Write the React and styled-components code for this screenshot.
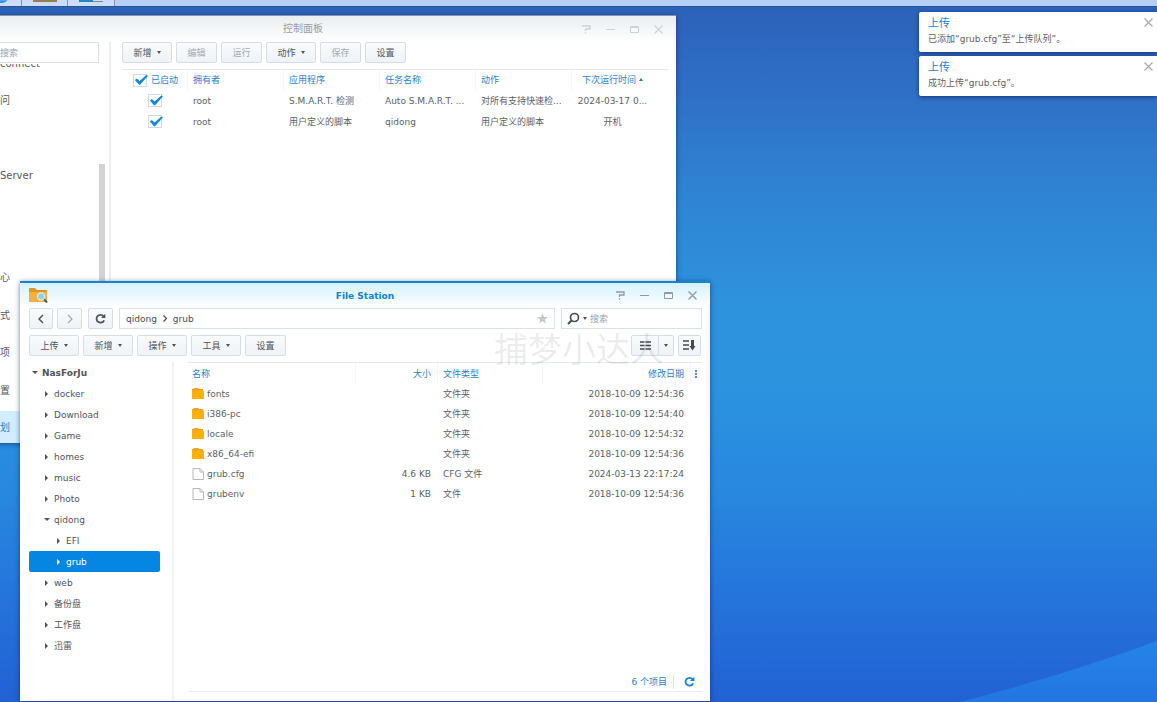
import React from "react";
import styled, { createGlobalStyle, css } from "styled-components";

const GlobalStyle = createGlobalStyle`
  * {
    box-sizing: border-box;
  }

  body {
    margin: 0;
    font-family: "DejaVu Sans", "Noto Sans CJK SC", sans-serif;
    font-size: 9px;
    line-height: 14px;
    color: #5b5f65;
  }

  button, input {
    font: inherit;
    color: inherit;
  }
`;

const Desktop = styled.main`
  position: relative;
  min-height: 100vh;
  overflow: hidden;
  background: linear-gradient(
    180deg,
    #2c60b9 0%,
    #2f72c8 15%,
    #2f84d3 28%,
    #2e92dc 43%,
    #2b93df 55%,
    #2888df 70%,
    #2577dc 83%,
    #2261d4 100%
  );
`;

const Slope = styled.svg`
  position: absolute;
  right: 0;
  bottom: 0;
  width: 240px;
  height: 64px;
`;

const Taskbar = styled.header`
  position: relative;
  display: flex;
  height: 7px;
  background: #b6cff4;
  border-bottom: 1px solid #2a5391;
`;

const TaskSlot = styled.div`
  display: flex;
  justify-content: center;
  width: ${(props) => props.$width};
  background: #cddcf8;
  border-right: 1px solid #7f93bd;
`;

const Window = styled.section`
  position: absolute;
  display: flex;
  flex-direction: column;
  background: #fff;
  box-shadow: 0 1px 5px rgba(8, 30, 80, 0.6);
`;

const ControlWindow = styled(Window)`
  top: 15px;
  left: -70px;
  width: 746px;
  height: 428px;
  border-top: 1px solid #8797ab;
`;

const FileWindow = styled(Window)`
  top: 281px;
  bottom: 1px;
  left: 20px;
  width: 690px;
  border-top: 2px solid #1584cb;
`;

const TitleBar = styled.div`
  display: grid;
  grid-template-columns: 1fr auto 1fr;
  align-items: center;
  height: ${(props) => (props.$active ? "25px" : "26px")};
  padding: 0 9px;
  background: ${(props) =>
    props.$active
      ? "linear-gradient(#d5f2ff, #fff)"
      : "linear-gradient(#e9eef0, #fff)"};
`;

const Title = styled.h1`
  margin: 0;
  grid-column: 2;
  font-size: ${(props) => (props.$active ? "9px" : "10px")};
  font-weight: ${(props) => (props.$active ? 700 : 400)};
  color: ${(props) => (props.$active ? "#1581cb" : "#999da1")};
`;

const WindowButtons = styled.div`
  display: flex;
  justify-content: flex-end;
  gap: 12px;
  padding-right: 3px;
  color: ${(props) => (props.$active ? "#8d9aa5" : "#cdd2d5")};
`;

const IconButton = styled.button`
  display: flex;
  align-items: center;
  justify-content: center;
  width: 12px;
  height: 12px;
  padding: 0;
  border: 0;
  background: none;
  color: inherit;
  cursor: pointer;
`;

const Button = styled.button`
  display: flex;
  align-items: center;
  justify-content: center;
  gap: 5px;
  width: ${(props) => props.$width || "41px"};
  height: 21px;
  padding: 0;
  border: 1px solid #d5dde5;
  border-radius: 2px;
  background: linear-gradient(#f9fbfc, #eff3f7);
  color: #4c535a;

  &:disabled {
    color: #a3a9b3;
  }
`;

const Caret = styled.span`
  border: 2px solid transparent;
  border-top: 3px solid #4c535a;
  border-bottom: 0;
`;

const Toolbar = styled.div`
  display: flex;
  gap: 4px;
`;

const Spacer = styled.div`
  flex: 1;
`;

const Columns = styled.div`
  display: flex;
  flex: 1;
  min-height: 0;
`;

/* control panel */

const SettingsNav = styled.nav`
  display: flex;
  flex-direction: column;
  width: 181px;
  border-right: 2px solid #ededee;
`;

const NavSearch = styled.input`
  width: 169px;
  height: 21px;
  padding: 0 0 0 69px;
  border: 1px solid #d9dee3;
  background: #fff;

  &::placeholder {
    color: #a0a0a5;
  }
`;

const NavBody = styled.div`
  display: flex;
  flex: 1;
  margin-top: 1px;
  overflow: hidden;
`;

const NavList = styled.div`
  display: flex;
  flex: 1;
  flex-direction: column;
  gap: 3px;
`;

const NavItem = styled.a`
  flex: none;
  height: 34px;
  margin-top: ${(props) => props.$space || 0};
  padding-left: 70px;
  line-height: 34px;
  font-size: 10px;
  text-decoration: none;
  color: ${(props) => (props.$active ? "#2b7cc7" : "#55595f")};
  background: ${(props) => (props.$active ? "#d3edfe" : "none")};
`;

const ScrollThumb = styled.div`
  width: 6px;
  height: 200px;
  margin: 100px 4px 0 0;
  background: #d3d3d4;
`;

const TaskPane = styled.div`
  flex: 1;
  padding: 0 8px 0 11px;
`;

const DataTable = styled.table`
  width: 100%;
  margin-top: 6px;
  border-top: 1px solid #e2e8ee;
  border-collapse: separate;
  border-spacing: 0;
  table-layout: fixed;

  th,
  td {
    height: ${(props) => props.$rowHeight};
    padding: 0 6px;
    overflow: hidden;
    font-weight: 400;
    text-align: left;
    text-overflow: ellipsis;
    white-space: nowrap;
  }

  th {
    height: ${(props) => props.$headHeight};
    color: #2b7fc5;
  }

  th + th {
    box-shadow: inset 1px 0 #f4f6f8;
  }
`;

const NextRun = css`
  && {
    padding: 0 19px 0 5px;
    text-align: center;
  }
`;

const NextRunHead = styled.th`
  ${NextRun}
`;

const NextRunCell = styled.td`
  ${NextRun}
`;

const SortMark = styled.span`
  display: inline-block;
  margin-left: 3px;
  border: 2px solid transparent;
  border-bottom: 3px solid #2b6fa5;
  border-top: 0;
  vertical-align: 2px;
`;

const CheckLabel = styled.label`
  display: flex;
  align-items: center;
  gap: 4px;
  padding-left: ${(props) => props.$indent};
`;

const Checkbox = styled.input.attrs({ type: "checkbox" })`
  appearance: none;
  width: 14px;
  height: 13px;
  margin: 0;
  border: 1px solid #cdd9e4;
  background: #fff;

  &:checked::before {
    content: "";
    display: block;
    width: 14px;
    height: 11px;
    background: #1686d9;
    clip-path: polygon(6% 50%, 20% 36%, 40% 60%, 88% 4%, 100% 12%, 44% 94%, 36% 94%);
  }
`;

/* file station */

const NavRow = styled.div`
  display: flex;
  gap: 6px;
  padding: 0 8px 0 9px;
`;

const ActionRow = styled(Toolbar)`
  padding: 6px 9px 0;
`;

const PathBar = styled.nav`
  display: flex;
  flex: 1;
  align-items: center;
  gap: 5px;
  height: 21px;
  padding: 0 6px;
  border: 1px solid #d9e0e6;

  a {
    color: #464b51;
    text-decoration: none;
  }
`;

const SearchBox = styled.label`
  display: flex;
  align-items: center;
  gap: 3px;
  width: 141px;
  height: 21px;
  padding: 0 5px;
  border: 1px solid #d9e0e6;

  input {
    flex: 1;
    min-width: 0;
    padding: 0;
    border: 0;
    outline: 0;
    background: none;
  }

  input::placeholder {
    color: #a0a0a5;
  }
`;

const SplitButton = styled.div`
  display: flex;

  button:first-child {
    border-radius: 2px 0 0 2px;
  }

  button:last-child {
    border-left: 0;
    border-radius: 0 2px 2px 0;
  }
`;

const Tree = styled.nav`
  width: 154px;
  margin-top: 6px;
  padding: 0 12px 0 9px;
  border-right: 2px solid #f0f2f4;
`;

const TreeItem = styled.a`
  display: flex;
  align-items: center;
  height: 21px;
  padding-left: ${(props) => 3 + props.$level * 12}px;
  border-radius: 2px;
  font-weight: ${(props) => (props.$level ? 400 : 700)};
  text-decoration: none;
  color: ${(props) => (props.$selected ? "#fff" : "#4f545a")};
  background: ${(props) => (props.$selected ? "#0486e2" : "none")};

  svg {
    flex: none;
    width: 6px;
    height: 6px;
    margin-right: 4px;
    fill: currentColor;
  }
`;

const FilePane = styled.div`
  display: flex;
  flex: 1;
  flex-direction: column;
  padding: 0 8px 9px 14px;
`;

const FileTable = styled(DataTable)`
  th:nth-child(1),
  td:nth-child(1) {
    padding-left: 4px;
  }

  th:nth-child(2),
  td:nth-child(2),
  th:nth-child(4),
  td:nth-child(4) {
    text-align: right;
  }

  th:nth-child(5) {
    padding: 0;
  }
`;

const FileName = styled.div`
  display: flex;
  align-items: center;
  gap: 3px;
`;

const StatusBar = styled.footer`
  display: flex;
  align-items: center;
  justify-content: flex-end;
  gap: 6px;
  height: 20px;
  margin-top: auto;
  padding-right: 6px;
  border-bottom: 1px solid #eceff1;
  color: #2b7fc5;

  button {
    width: 23px;
    height: 14px;
    padding-left: 8px;
    border-left: 1px solid #dfe5ea;
    color: #1684c4;
  }
`;

const Watermark = styled.div`
  position: absolute;
  top: 326px;
  left: 494px;
  font-size: 34px;
  line-height: 48px;
  color: rgba(60, 60, 60, 0.1);
  pointer-events: none;
`;

const Toasts = styled.aside`
  position: absolute;
  top: 12px;
  right: 0;
  display: grid;
  gap: 4px;
  width: 238px;
`;

const Toast = styled.div`
  display: flex;
  justify-content: space-between;
  height: 40px;
  padding: 4px 3px 0 9px;
  border-radius: 2px 0 0 2px;
  background: #fff;
  box-shadow: 0 1px 4px rgba(8, 30, 80, 0.7);
  color: #a5a9ad;

  h2 {
    margin: 0;
    font-size: 11px;
    font-weight: 400;
    line-height: 16px;
    color: #2b7cc5;
  }

  p {
    margin: 0;
    color: #5c6065;
  }
`;

const CloseIcon = () => (
  <svg width="9" height="9" viewBox="0 0 9 9" fill="none" stroke="currentColor" strokeWidth="1.200">
    <path d="M.5.5l8 8M8.500.5l-8 8" />
  </svg>
);

const RefreshIcon = () => (
  <svg width="11" height="11" viewBox="0 0 11 11" fill="none" stroke="currentColor" strokeWidth="1.800">
    <path d="M8.600 3.200A4 3.900 0 1 0 9.200 7.300" />
    <path d="M10.300.8v4.200H6z" fill="currentColor" stroke="none" />
  </svg>
);

const FolderIcon = () => (
  <svg width="12" height="12" viewBox="0 0 12 12">
    <path d="M0 1h1l1-1h4l1 1h4v2H0z" fill="#f0a020" />
    <path d="M0 2.500h11l1 1V10.500q0 .5-.5.5H.5Q0 11 0 10.500z" fill="#ffaf05" />
  </svg>
);

const FileIcon = () => (
  <svg width="12" height="12" viewBox="0 0 12 12">
    <path d="M1 .5h7L11.500 4v7.500H1z" fill="#fff" stroke="#b4b8bc" />
    <path d="M8 .5V4h3.500" fill="none" stroke="#b4b8bc" />
  </svg>
);

const AppIcon = () => (
  <svg width="19" height="15" viewBox="0 0 19 15">
    <path d="M0 1q0-1 1-1h5l2 2h9q1 0 1 1v10q0 1-1 1H1q-1 0-1-1z" fill="#dd9526" />
    <path d="M0 4h18v9q0 1-1 1H1q-1 0-1-1z" fill="#f3b13b" />
    <path d="M14.500 10.500l3.500 4" stroke="#52605f" strokeWidth="2" />
    <circle cx="12" cy="8.500" r="3.600" fill="#8fd0ee" stroke="#dceff5" strokeWidth="1.200" />
  </svg>
);

const TreeArrow = ({ open }) => (
  <svg viewBox="0 0 6 6">
    <path d={open ? "M0 1h6L3 4z" : "M1 0v6l3-3z"} />
  </svg>
);

function Controls({ active }) {
  return (
    <WindowButtons $active={active}>
      <IconButton aria-label="帮助">
        <svg width="9" height="9" viewBox="0 0 9 9" fill="none" stroke="currentColor" strokeWidth="1.300">
          <path d="M0 1h8v3H3.500v2M3.500 7.300v1.500" />
        </svg>
      </IconButton>
      <IconButton aria-label="最小化">
        <svg width="9" height="9" viewBox="0 0 9 9" stroke="currentColor">
          <path d="M0 4.500h9" />
        </svg>
      </IconButton>
      <IconButton aria-label="最大化">
        <svg width="9" height="9" viewBox="0 0 9 9" fill="none" stroke="currentColor">
          <path d="M.5 1.500h8v6h-8zM0 2.500h9" />
        </svg>
      </IconButton>
      <IconButton aria-label="关闭">
        <CloseIcon />
      </IconButton>
    </WindowButtons>
  );
}

const settings = [
  { name: "connect", space: "-17px" },
  { name: "问" },
  { name: "Server", space: "38px" },
  { name: "心", space: "65px" },
  { name: "式", space: "1px" },
  { name: "项" },
  { name: "置", space: "1px" },
  { name: "划", active: true },
];

const tasks = [
  ["root", "S.M.A.R.T. 检测", "Auto S.M.A.R.T. ...", "对所有支持快速检...", "2024-03-17 0..."],
  ["root", "用户定义的脚本", "qidong", "用户定义的脚本", "开机"],
];

const tree = [
  { name: "NasForJu", level: 0, open: true },
  { name: "docker", level: 1 },
  { name: "Download", level: 1 },
  { name: "Game", level: 1 },
  { name: "homes", level: 1 },
  { name: "music", level: 1 },
  { name: "Photo", level: 1 },
  { name: "qidong", level: 1, open: true },
  { name: "EFI", level: 2 },
  { name: "grub", level: 2, selected: true },
  { name: "web", level: 1 },
  { name: "备份盘", level: 1 },
  { name: "工作盘", level: 1 },
  { name: "迅雷", level: 1 },
];

const files = [
  { name: "fonts", type: "文件夹", date: "2018-10-09 12:54:36", folder: true },
  { name: "i386-pc", type: "文件夹", date: "2018-10-09 12:54:40", folder: true },
  { name: "locale", type: "文件夹", date: "2018-10-09 12:54:32", folder: true },
  { name: "x86_64-efi", type: "文件夹", date: "2018-10-09 12:54:36", folder: true },
  { name: "grub.cfg", size: "4.6 KB", type: "CFG 文件", date: "2024-03-13 22:17:24" },
  { name: "grubenv", size: "1 KB", type: "文件", date: "2018-10-09 12:54:36" },
];

function ControlPanel() {
  return (
    <ControlWindow>
      <TitleBar>
        <Title>控制面板</Title>
        <Controls />
      </TitleBar>
      <Columns>
        <SettingsNav>
          <NavSearch placeholder="搜索" aria-label="搜索" />
          <NavBody>
            <NavList>
              {settings.map((item) => (
                <NavItem key={item.name} href="#" $space={item.space} $active={item.active}>
                  {item.name}
                </NavItem>
              ))}
            </NavList>
            <ScrollThumb />
          </NavBody>
        </SettingsNav>
        <TaskPane>
          <Toolbar>
            <Button $width="50px">新增 <Caret /></Button>
            <Button disabled>编辑</Button>
            <Button disabled>运行</Button>
            <Button $width="50px">动作 <Caret /></Button>
            <Button disabled>保存</Button>
            <Button>设置</Button>
          </Toolbar>
          <DataTable $headHeight="20px" $rowHeight="21px">
            <colgroup>
              <col width="65" />
              <col width="96" />
              <col width="96" />
              <col width="96" />
              <col width="96" />
              <col />
            </colgroup>
            <thead>
              <tr>
                <th>
                  <CheckLabel $indent="5px">
                    <Checkbox defaultChecked />
                    已启动
                  </CheckLabel>
                </th>
                <th>拥有者</th>
                <th>应用程序</th>
                <th>任务名称</th>
                <th>动作</th>
                <NextRunHead>
                  下次运行时间
                  <SortMark />
                </NextRunHead>
              </tr>
            </thead>
            <tbody>
              {tasks.map(([owner, app, name, action, next]) => (
                <tr key={name}>
                  <td>
                    <CheckLabel $indent="20px">
                      <Checkbox defaultChecked aria-label={name} />
                    </CheckLabel>
                  </td>
                  <td>{owner}</td>
                  <td>{app}</td>
                  <td>{name}</td>
                  <td>{action}</td>
                  <NextRunCell>{next}</NextRunCell>
                </tr>
              ))}
            </tbody>
          </DataTable>
        </TaskPane>
      </Columns>
    </ControlWindow>
  );
}

function FileStation() {
  return (
    <FileWindow>
      <TitleBar $active>
        <AppIcon />
        <Title $active>File Station</Title>
        <Controls active />
      </TitleBar>
      <NavRow>
        <Toolbar>
          <Button $width="24px" aria-label="后退">
            <svg width="6" height="10" viewBox="0 0 6 10" fill="none" stroke="currentColor" strokeWidth="1.500">
              <path d="M5 1L1 5l4 4" />
            </svg>
          </Button>
          <Button $width="25px" disabled aria-label="前进">
            <svg width="6" height="10" viewBox="0 0 6 10" fill="none" stroke="currentColor" strokeWidth="1.300">
              <path d="M1 1l4 4-4 4" />
            </svg>
          </Button>
        </Toolbar>
        <Button $width="25px" aria-label="刷新">
          <RefreshIcon />
        </Button>
        <PathBar>
          <a href="#">qidong</a>
          <svg width="6" height="7" viewBox="0 0 6 7" fill="none" stroke="#464b51" strokeWidth="1.200">
            <path d="M1.500.5l3 3-3 3" />
          </svg>
          <a href="#">grub</a>
          <Spacer />
          <svg width="11" height="11" viewBox="0 0 11 11" fill="#c3c6c9">
            <path d="M5.500 0l1.400 3.900H11L7.700 6.400 9 10.500 5.500 8.100 2 10.500l1.300-4.100L0 3.900h4.100z" />
          </svg>
        </PathBar>
        <SearchBox>
          <svg width="13" height="13" viewBox="0 0 13 13" fill="none" stroke="#4a4f55">
            <circle cx="7.500" cy="5.500" r="4" strokeWidth="1.700" />
            <path d="M4.500 8.500L1 12" strokeWidth="2.200" />
          </svg>
          <Caret />
          <input placeholder="搜索" aria-label="搜索" />
        </SearchBox>
      </NavRow>
      <ActionRow>
        <Button $width="50px">上传 <Caret /></Button>
        <Button $width="50px">新增 <Caret /></Button>
        <Button $width="50px">操作 <Caret /></Button>
        <Button $width="50px">工具 <Caret /></Button>
        <Button>设置</Button>
        <Spacer />
        <SplitButton>
          <Button $width="28px" aria-label="列表视图">
            <svg width="11" height="9" viewBox="0 0 11 9" stroke="#454a50" strokeWidth="1.400">
              <path d="M0 1h4.500M5.500 1H11M0 4.500h4.500M5.500 4.500H11M0 8h4.500M5.500 8H11" />
            </svg>
          </Button>
          <Button $width="15px" aria-label="视图选项">
            <Caret />
          </Button>
        </SplitButton>
        <Button $width="23px" aria-label="排序">
          <svg width="13" height="11" viewBox="0 0 13 11" fill="none" stroke="#454a50">
            <path d="M0 1h6M0 5h6M0 9h6" strokeWidth="1.400" />
            <path d="M9.500 0v7" strokeWidth="3" />
            <path d="M6.500 6h6L9.500 10.500z" fill="#454a50" stroke="none" />
          </svg>
        </Button>
      </ActionRow>
      <Columns>
        <Tree>
          {tree.map((node) => (
            <TreeItem key={node.name} href="#" $level={node.level} $selected={node.selected}>
              <TreeArrow open={node.open} />
              {node.name}
            </TreeItem>
          ))}
        </Tree>
        <FilePane>
          <FileTable $headHeight="21px" $rowHeight="20px">
            <colgroup>
              <col />
              <col width="82" />
              <col width="105" />
              <col width="148" />
              <col width="12" />
            </colgroup>
            <thead>
              <tr>
                <th>名称</th>
                <th>大小</th>
                <th>文件类型</th>
                <th>修改日期</th>
                <th>
                  <IconButton aria-label="选择列">
                    <svg width="2" height="8" viewBox="0 0 2 8" fill="#5a8fbb">
                      <path d="M0 0h2v2H0zM0 3h2v2H0zM0 6h2v2H0z" />
                    </svg>
                  </IconButton>
                </th>
              </tr>
            </thead>
            <tbody>
              {files.map((file) => (
                <tr key={file.name}>
                  <td>
                    <FileName>
                      {file.folder ? <FolderIcon /> : <FileIcon />}
                      {file.name}
                    </FileName>
                  </td>
                  <td>{file.size}</td>
                  <td>{file.type}</td>
                  <td>{file.date}</td>
                  <td />
                </tr>
              ))}
            </tbody>
          </FileTable>
          <StatusBar>
            <span>6 个项目</span>
            <IconButton aria-label="刷新">
              <RefreshIcon />
            </IconButton>
          </StatusBar>
        </FilePane>
      </Columns>
    </FileWindow>
  );
}

function Notice({ text }) {
  return (
    <Toast>
      <div>
        <h2>上传</h2>
        <p>{text}</p>
      </div>
      <IconButton aria-label="关闭">
        <CloseIcon />
      </IconButton>
    </Toast>
  );
}

function App() {
  return (
    <>
      <GlobalStyle />
      <Desktop>
        <Slope viewBox="0 0 240 64" preserveAspectRatio="none">
          <defs>
            <linearGradient id="slope" x1="0" y1="0" x2="0" y2="1">
              <stop offset="0" stopColor="#2585e8" />
              <stop offset="1" stopColor="#2275e2" />
            </linearGradient>
          </defs>
          <path d="M42 64Q145 38 240 3V64z" fill="url(#slope)" />
        </Slope>
        <Taskbar>
          <TaskSlot $width="22px">
            <svg width="22" height="6" viewBox="0 0 22 6">
              <path d="M0 0h8Q5 3 0 3z" fill="#2796e4" />
            </svg>
          </TaskSlot>
          <TaskSlot $width="46px">
            <svg width="24" height="6" viewBox="0 0 24 6">
              <path d="M0 0h24v2H0z" fill="#967c55" />
            </svg>
          </TaskSlot>
          <TaskSlot $width="47px">
            <svg width="24" height="6" viewBox="0 0 24 6">
              <path d="M0 0h14v2H0z" fill="#2587b5" />
              <path d="M14 1h10v1H14z" fill="#7d8b93" />
            </svg>
          </TaskSlot>
        </Taskbar>
        <ControlPanel />
        <FileStation />
        <Watermark>捕梦小达人</Watermark>
        <Toasts>
          <Notice text="已添加“grub.cfg”至“上传队列”。" />
          <Notice text="成功上传“grub.cfg”。" />
        </Toasts>
      </Desktop>
    </>
  );
}

export default App;
